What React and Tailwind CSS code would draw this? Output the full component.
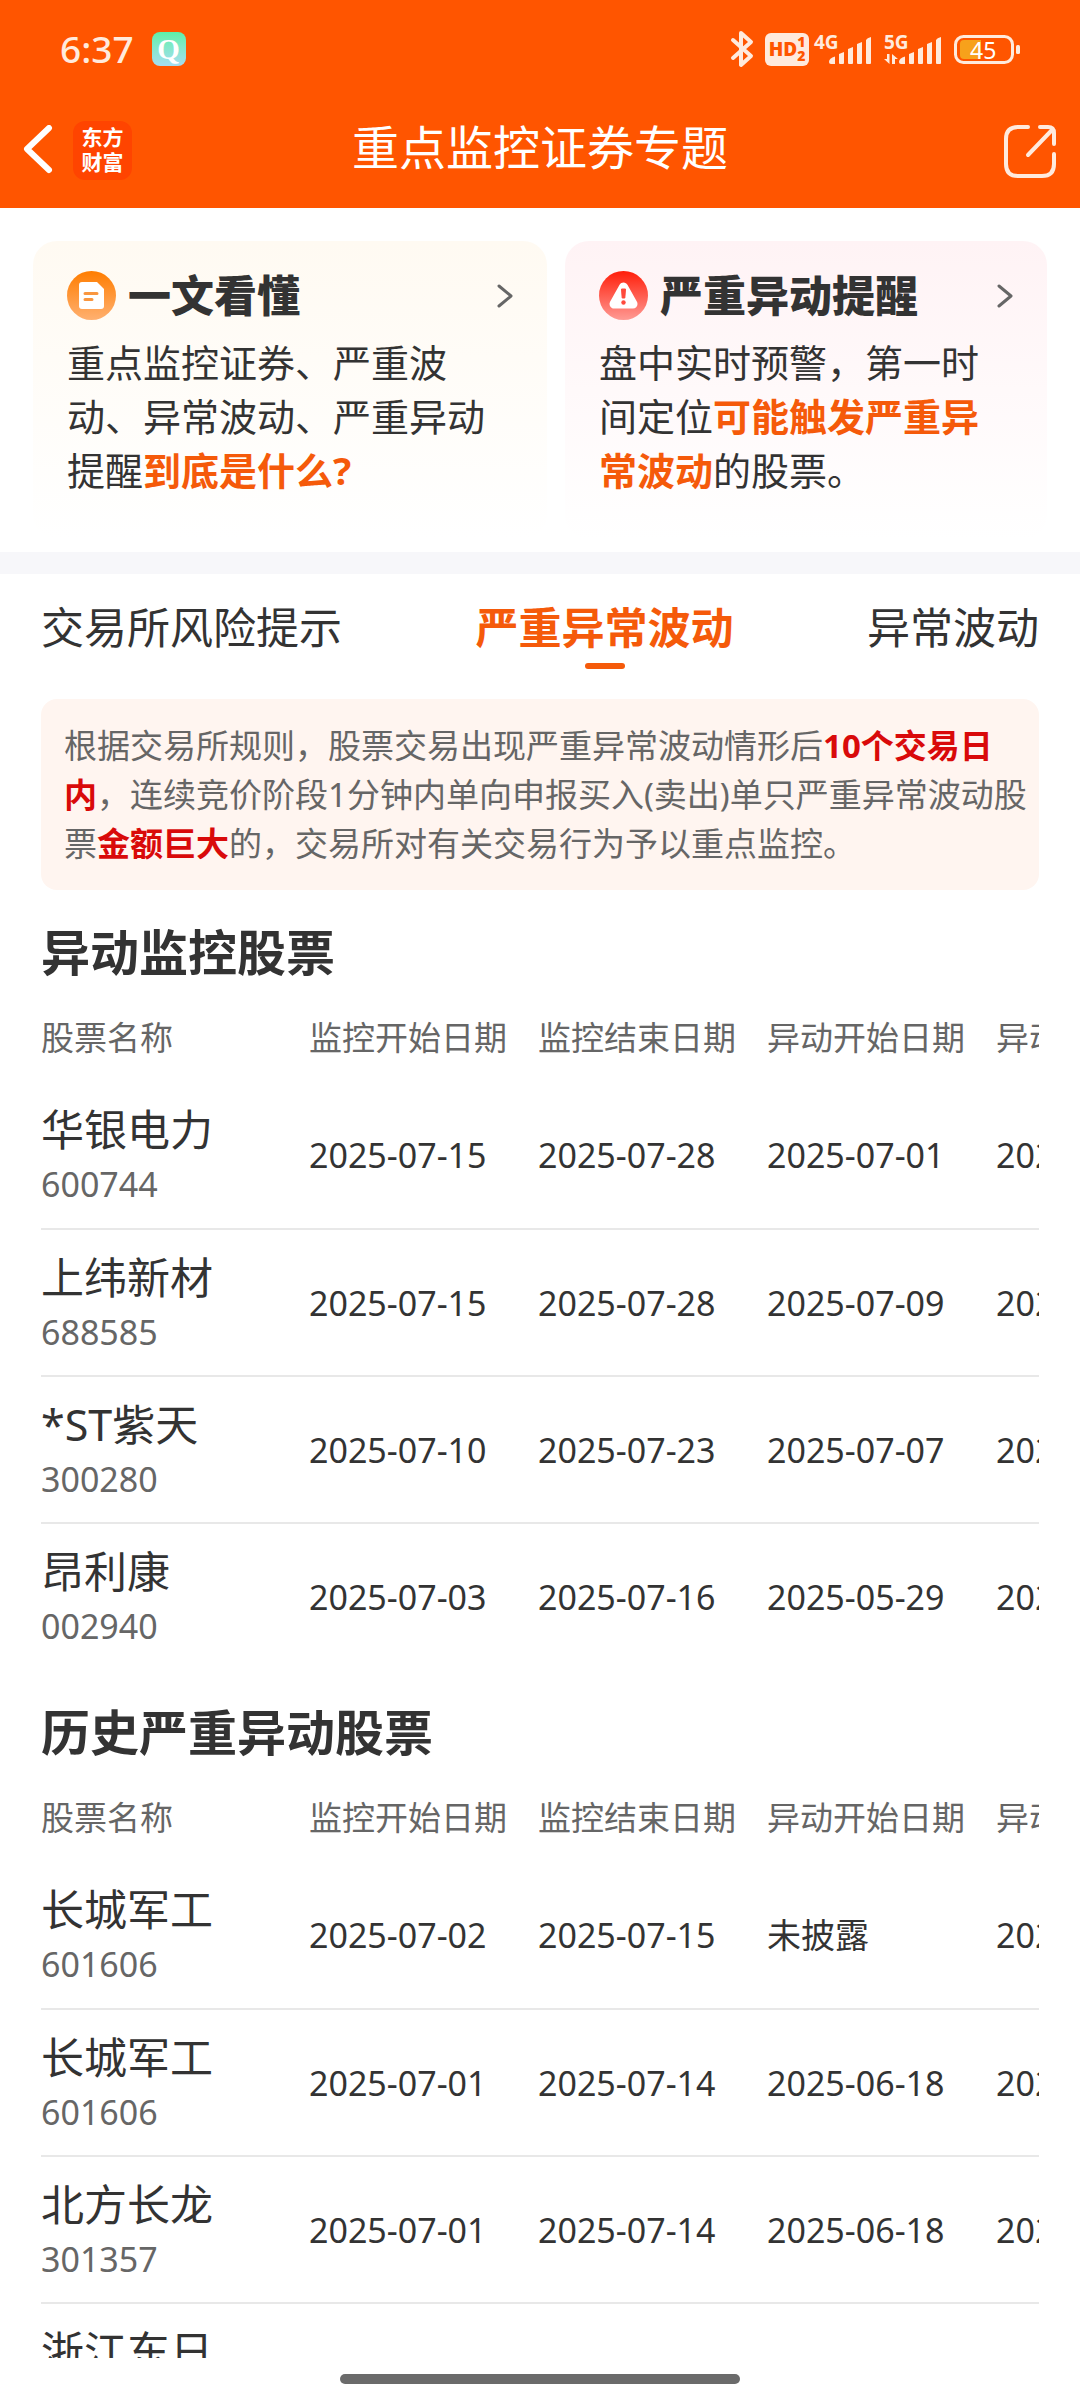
import { useState } from "react"

const TABS = ["交易所风险提示", "严重异常波动", "异常波动"]

const COLUMNS = ["股票名称", "监控开始日期", "监控结束日期", "异动开始日期", "异动结束日期"]

const MONITORED = [
    { name: "华银电力", code: "600744", dates: ["2025-07-15", "2025-07-28", "2025-07-01", "2025-07-14"] },
    { name: "上纬新材", code: "688585", dates: ["2025-07-15", "2025-07-28", "2025-07-09", "2025-07-14"] },
    { name: "*ST紫天", code: "300280", dates: ["2025-07-10", "2025-07-23", "2025-07-07", "2025-07-09"] },
    { name: "昂利康", code: "002940", dates: ["2025-07-03", "2025-07-16", "2025-05-29", "2025-07-02"] },
]

const HISTORY = [
    { name: "长城军工", code: "601606", dates: ["2025-07-02", "2025-07-15", "未披露", "2025-07-01"] },
    { name: "长城军工", code: "601606", dates: ["2025-07-01", "2025-07-14", "2025-06-18", "2025-06-30"] },
    { name: "北方长龙", code: "301357", dates: ["2025-07-01", "2025-07-14", "2025-06-18", "2025-06-30"] },
    { name: "浙江东日", code: "600113", dates: ["2025-06-30", "2025-07-11", "2025-06-16", "2025-06-27"] },
]

function SignalBars() {
    return (
        <svg className="w-[43px] h-[27px]" viewBox="0 0 43 27" fill="currentColor">
            <path d="M0 25q0-4 6-5.500v7.500H2q-2 0-2-2z" />
            <path d="M10 17l5-2v11q0 1-1 1h-3q-1 0-1-1z" />
            <path d="M19 12l5-2v16q0 1-1 1h-3q-1 0-1-1z" />
            <path d="M28 7l5-2v21q0 1-1 1h-3q-1 0-1-1z" />
            <path d="M37 3q1-2 5-3v26q0 1-1 1h-3q-1 0-1-1z" />
        </svg>
    )
}

function StatusBar() {
    return (
        <div className="flex items-center justify-between h-[98px] px-[60px] text-[#ffeadd]">
            <div className="flex items-center gap-[18px]">
                <span className="text-[37px] leading-[40px] font-medium">6:37</span>
                <span
                    className="flex
                        items-center
                        justify-center
                        w-[34px]
                        h-[34px]
                        rounded-lg
                        bg-linear-to-b
                        from-[#5cf0a8]
                        to-[#a5dcf0]
                        font-['Liberation_Serif',serif]
                        font-bold
                        text-[29px]
                        leading-[34px]
                        text-white"
                >
                    Q
                </span>
            </div>

            <div className="flex items-center">
                <svg
                    className="w-[24px] h-[38px]"
                    viewBox="0 0 24 38"
                    fill="none"
                    stroke="currentColor"
                    strokeWidth="4"
                    strokeLinejoin="round"
                    strokeLinecap="round"
                >
                    <path d="M3 10l18 16-10 9V3l10 9L3 28" />
                </svg>
                <span
                    className="flex
                        items-center
                        justify-center
                        w-[44px]
                        h-[33px]
                        ml-[11px]
                        rounded-md
                        bg-[#ffeadd]
                        text-[#ff5500]
                        font-black"
                >
                    <span className="text-[19px] leading-[20px]">HD</span>
                    <span className="flex flex-col text-[14px] leading-[14px]">
                        <span>1</span>
                        <span>2</span>
                    </span>
                </span>

                <span className="relative flex items-end justify-end w-[58px] h-[30px] ml-[5px]">
                    <span className="absolute left-0 top-0 text-[19px] leading-[16px] font-bold">4G</span>
                    <SignalBars />
                </span>

                <span className="relative flex items-end justify-end w-[58px] h-[30px] ml-[12px]">
                    <span className="absolute left-0 top-0 text-[19px] leading-[16px] font-bold">5G</span>
                    <svg className="absolute left-0 bottom-0 w-[14px] h-[10px]" viewBox="0 0 14 10" fill="currentColor">
                        <path d="M3 0h2.500v10L0 5h3z" />
                        <path d="M8 0l6 5h-3v5H8z" />
                    </svg>
                    <SignalBars />
                </span>

                <span className="relative flex items-center ml-[12px]">
                    <svg className="w-[66px] h-[30px]" viewBox="0 0 66 30" fill="none">
                        <rect x="1.500" y="2.500" width="57" height="26" rx="8" stroke="currentColor" strokeWidth="3" />
                        <path d="M6 10q0-4 4-4h17v19H10q-4 0-4-4z" fill="#f7a11b" />
                        <rect x="62" y="11" width="4" height="9" rx="1.500" fill="currentColor" />
                    </svg>
                    <span className="absolute left-[16px] top-[4px] text-[23px] leading-[24px] text-white">45</span>
                </span>
            </div>
        </div>
    )
}

function Header() {
    return (
        <header className="shrink-0 pb-[6px] bg-[#ff5500]">
            <StatusBar />
            <div className="grid grid-cols-[1fr_auto_1fr] items-center h-[104px] px-[23px] text-white">
                <div className="flex items-center gap-[20px]">
                    <button type="button" aria-label="返回">
                        <svg
                            className="w-[30px] h-[50px]"
                            viewBox="0 0 30 50"
                            fill="none"
                            stroke="currentColor"
                            strokeWidth="6"
                            strokeLinecap="round"
                            strokeLinejoin="round"
                        >
                            <path d="M26 3L4 24l22 21" />
                        </svg>
                    </button>
                    <a
                        href="#home"
                        className="flex
                            flex-col
                            items-center
                            justify-center
                            w-[59px]
                            h-[59px]
                            rounded-xl
                            bg-[#ff4400]
                            text-[21px]
                            leading-[25px]
                            font-bold"
                    >
                        <span>东方</span>
                        <span>财富</span>
                    </a>
                </div>
                <h1 className="pb-[6px] text-[47px] leading-[60px]">重点监控证券专题</h1>
                <button type="button" aria-label="分享" className="justify-self-end">
                    <svg
                        className="w-[54px] h-[58px]"
                        viewBox="0 0 54 58"
                        fill="none"
                        stroke="#ffeadd"
                        strokeWidth="4"
                        strokeLinecap="round"
                        strokeLinejoin="round"
                    >
                        <path d="M25 6H15Q3 6 3 18v25q0 12 12 12h24q12 0 12-12V33" />
                        <path d="M37 6h8q6 0 6 6v11M49 9L25 34" />
                    </svg>
                </button>
            </div>
        </header>
    )
}

function Chevron() {
    return (
        <svg
            className="w-[16px] h-[24px] ml-auto"
            viewBox="0 0 16 24"
            fill="none"
            stroke="#666"
            strokeWidth="3"
            strokeLinecap="round"
            strokeLinejoin="round"
        >
            <path d="M2 2l12 10L2 22" />
        </svg>
    )
}

function DocIcon() {
    return (
        <svg className="w-[49px] h-[49px]" viewBox="0 0 49 49">
            <defs>
                <linearGradient id="docFill" x1="0" y1="0" x2="0" y2="1">
                    <stop offset="0" stopColor="#ff7d00" />
                    <stop offset="1" stopColor="#ffb070" />
                </linearGradient>
            </defs>
            <circle cx="24.500" cy="24.500" r="24.500" fill="url(#docFill)" />
            <path d="M15 11h15l7 7v17q0 3-3 3H15q-3 0-3-3V14q0-3 3-3z" fill="#fff" />
            <path d="M18 22.500h12M18 28.500h7" stroke="#f9963f" strokeWidth="3" strokeLinecap="round" />
        </svg>
    )
}

function AlertIcon() {
    return (
        <svg className="w-[49px] h-[49px]" viewBox="0 0 49 49">
            <defs>
                <linearGradient id="alertFill" x1="0" y1="0" x2="0" y2="1">
                    <stop offset="0" stopColor="#ff1e0a" />
                    <stop offset="1" stopColor="#ff9a94" />
                </linearGradient>
            </defs>
            <circle cx="24.500" cy="24.500" r="24.500" fill="url(#alertFill)" />
            <path
                d="M24.500 16L15 33h19z"
                fill="#fff"
                stroke="#fff"
                strokeWidth="9"
                strokeLinejoin="round"
            />
            <path d="M22.500 18h4l-.7 9h-2.600z" fill="#ff4a3c" stroke="#ff4a3c" strokeLinejoin="round" />
            <circle cx="24.500" cy="31.500" r="2.200" fill="#ff4a3c" />
        </svg>
    )
}

function InfoCard({ href, icon, title, className, children }) {
    return (
        <a
            href={href}
            className={`block px-[34px] pt-[30px] pb-[42px] rounded-3xl bg-linear-to-b to-white ${className}`}
        >
            <div className="flex items-center gap-[12px]">
                {icon}
                <h2 className="text-[43px] leading-[49px] font-black">{title}</h2>
                <Chevron />
            </div>
            <p className="mt-[15px] text-[38px] leading-[54px]">{children}</p>
        </a>
    )
}

function StockTable({ title, rows }) {
    return (
        <section className="px-[41px]">
            <h2 className="pt-[30px] pb-[10px] text-[49px] leading-[64px] font-bold">{title}</h2>
            <div className="overflow-x-auto [scrollbar-width:none]">
                <table className="w-[1184px] table-fixed border-collapse text-left">
                    <thead>
                        <tr className="h-[88px] text-[33px] leading-[48px] text-[#666]">
                            {COLUMNS.map((column, i) => (
                                <th
                                    key={column}
                                    scope="col"
                                    className={`p-0 font-normal ${i === 0 ? "w-[268px]" : "w-[229px]"}`}
                                >
                                    {column}
                                </th>
                            ))}
                        </tr>
                    </thead>
                    <tbody>
                        {rows.map((row, i) => (
                            <tr key={i} className="h-[147px] border-b-2 border-[#e8e8e8] last:border-b-0">
                                <td className="p-0 pt-1">
                                    <div className="text-[43px] leading-[55px]">{row.name}</div>
                                    <div className="text-[34px] leading-[55px] text-[#666]">{row.code}</div>
                                </td>
                                {row.dates.map((date, j) => (
                                    <td key={j} className="p-0 text-[34px] leading-[48px]">{date}</td>
                                ))}
                            </tr>
                        ))}
                    </tbody>
                </table>
            </div>
        </section>
    )
}

function App() {

    const [activeTab, setActiveTab] = useState(TABS[1])

    return (
        <div
            className="flex
                flex-col
                h-screen
                bg-white
                text-[#333]
                font-['Noto_Sans','Noto_Sans_CJK_SC',sans-serif]"
            lang="zh-CN"
        >
            <Header />

            <main className="flex-1 min-h-0 overflow-y-auto [scrollbar-width:none]">
                <div className="grid grid-cols-[515fr_483fr] gap-[18px] px-[33px] pt-[33px] pb-[13px]">
                    <InfoCard href="#guide" icon={<DocIcon />} title="一文看懂" className="from-[#fffaf2]">
                        重点监控证券、严重波动、异常波动、严重异动提醒
                        <strong className="text-[#f55a0a]">到底是什么?</strong>
                    </InfoCard>
                    <InfoCard href="#alerts" icon={<AlertIcon />} title="严重异动提醒" className="from-[#fff3f5]">
                        盘中实时预警，第一时间定位
                        <strong className="text-[#f55a0a]">可能触发严重异常波动</strong>
                        的股票。
                    </InfoCard>
                </div>

                <div className="h-[22px] bg-[#f7f7fa]" />

                <div role="tablist" className="flex justify-between px-[41px] pt-[24px]">
                    {TABS.map((tab) => (
                        <button
                            key={tab}
                            type="button"
                            role="tab"
                            aria-selected={activeTab === tab}
                            onClick={() => setActiveTab(tab)}
                            className={`flex flex-col items-center gap-[5px] text-[43px] leading-[60px]
                                        ${activeTab === tab ? "font-bold text-[#f55a0a]" : ""}`}
                        >
                            {tab}
                            {activeTab === tab && (
                                <span className="w-[40px] h-[6px] rounded-full bg-[#f55a0a]" />
                            )}
                        </button>
                    ))}
                </div>

                <p
                    className="mx-[41px]
                        mt-[30px]
                        pl-[23px]
                        pr-2
                        py-[22px]
                        rounded-2xl
                        bg-[#fff5f0]
                        text-[33px]
                        leading-[49px]
                        text-[#666]"
                >
                    根据交易所规则，股票交易出现严重异常波动情形后
                    <strong className="text-[#d90a0a]">10个交易日内</strong>
                    ，连续竞价阶段1分钟内单向申报买入(卖出)单只严重异常波动股票
                    <strong className="text-[#d90a0a]">金额巨大</strong>
                    的，交易所对有关交易行为予以重点监控。
                </p>

                <StockTable title="异动监控股票" rows={MONITORED} />
                <StockTable title="历史严重异动股票" rows={HISTORY} />
            </main>

            <footer className="flex shrink-0 justify-center h-[42px] pt-[16px] bg-white">
                <span className="w-[37%] h-[10px] rounded-full bg-[#6b6b6b]" />
            </footer>
        </div>
    )
}

export default App
